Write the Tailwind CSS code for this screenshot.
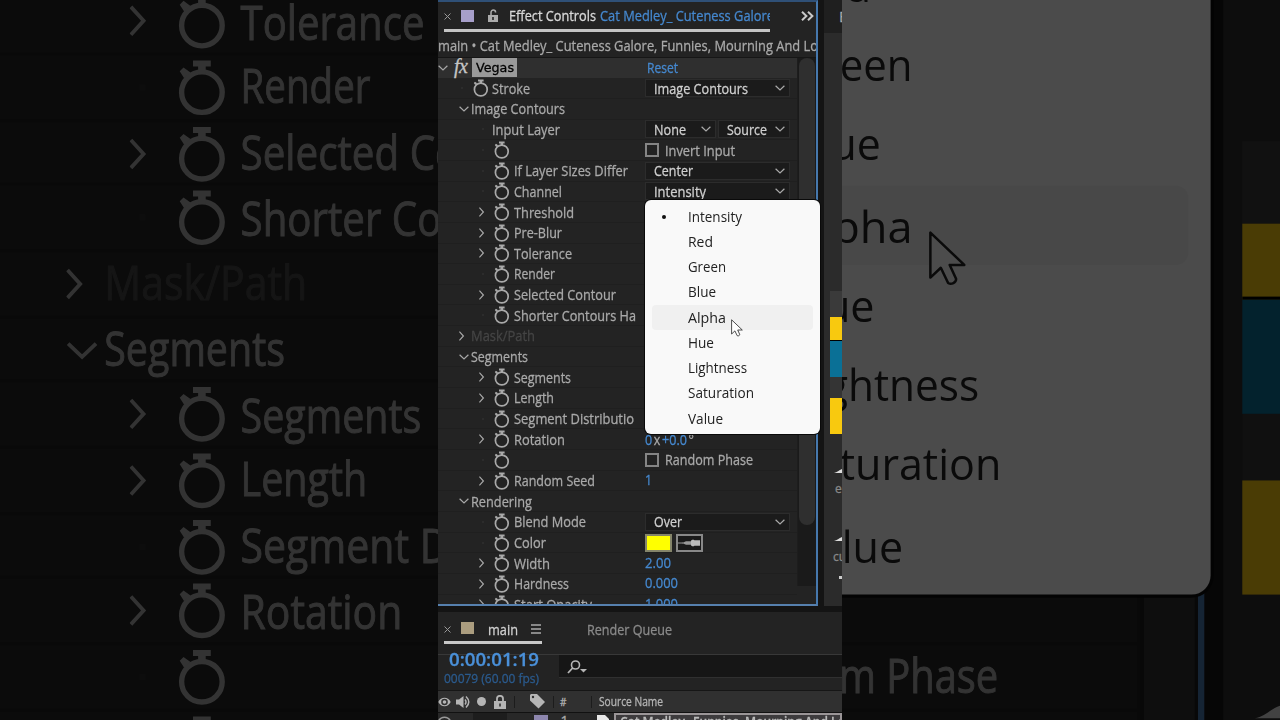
<!DOCTYPE html>
<html lang="en" class="overflow-hidden h-[720px]">
<head>
    <meta charset="UTF-8">
    <meta name="viewport" content="width=device-width, initial-scale=1.0">
    <title>Effect Controls</title>
    <script src="https://cdn.jsdelivr.net/npm/@tailwindcss/browser@4"></script>
</head>
<body class="w-[1280px] h-[720px] overflow-hidden bg-black relative font-['Open_Sans',sans-serif] text-[15px] leading-none">
    <!-- Shared icons -->
    <svg class="hidden">
        <symbol id="watch" viewBox="0 0 16 18">
            <circle cx="7.800" cy="10.5" r="6.4" fill="none" stroke="currentColor" stroke-width="1.7"/>
            <path d="M5 .5h5.6v1.9H9v2H6.6v-2H5zM.8 3.9 2 2.700l2.2 1.6-2 1.8z" fill="currentColor"/>
        </symbol>
        <symbol id="down" viewBox="0 0 10 6">
            <path d="M.6.8 5 5 9.4.8" fill="none" stroke="currentColor" stroke-width="1.2"/>
        </symbol>
        <symbol id="right" viewBox="0 0 6 10">
            <path d="M.4.6 4.400 5 .4 9.4" fill="none" stroke="currentColor" stroke-width="1.2"/>
        </symbol>
    </svg>

    <!-- Dimmed, enlarged copy of the stage goes here -->
    <div id="backdrop" class="absolute top-0 left-[438px] w-[404px] h-[720px] scale-[3.17] brightness-[.3] overflow-hidden"></div>

    <main id="stage" class="relative mx-auto w-[404px] h-[720px] overflow-hidden bg-[#141414] text-[#a9a9a9] [-webkit-text-stroke-width:0.3px] flex flex-col">
        <div class="flex h-[606px] shrink-0">
            <!-- Effect controls panel -->
            <section class="w-[380px] h-[606px] shrink-0 bg-[#232323] border-t-2 border-r-2 border-b-2 border-t-[#2f5077] border-r-[#4678ad] border-b-[#5680ae] overflow-hidden">
                <div class="flex h-[30px]">
                    <div class="relative w-[326px] h-[30px] ml-1.5 flex items-center border-b-[3px] border-[#c4c4c4] overflow-hidden shrink-0">
                        <svg class="w-[7px] h-[7px] mt-[2px] shrink-0 text-[#999]" viewBox="0 0 7 7"><path d="M.5.5l6 6M6.5.5l-6 6" stroke="currentColor"/></svg>
                        <span class="w-[13px] h-[12px] bg-[#a79fca] ml-[10px] shrink-0"></span>
                        <svg class="w-[12px] h-[13px] ml-[13px] shrink-0 text-[#aaa]" viewBox="0 0 12 13"><path d="M1 6h10v7H1zM5.2 8h1.6v3H5.2z" fill-rule="evenodd" fill="currentColor"/><path d="M4 6V3.4a2.3 2.3 0 0 1 4.6 0" fill="none" stroke="currentColor" stroke-width="1.5"/></svg>
                        <span class="w-[91px] ml-[10px] shrink-0 text-[#d8d8d8]"><span data-w="87">Effect Controls</span></span>
                        <span class="text-[#4588cf]"><span data-w="174">Cat Medley_ Cuteness Galore</span></span>
                    </div>
                    <svg class="w-[13px] h-[10px] mt-[9px] ml-[31px] text-[#c9c9c9]" viewBox="0 0 13 10"><path d="M1 .8 5.4 5 1 9.2M7 .8 11.4 5 7 9.2" fill="none" stroke="currentColor" stroke-width="2"/></svg>
                </div>
                <div class="h-[25.6px] flex items-center pt-0.5 border-b border-[#161616]">
                    <span data-w="380">main • Cat Medley_ Cuteness Galore, Funnies, Mourning And Lo</span>
                </div>
                <div class="flex">
                    <div id="rows" class="w-[359px] h-[546px] shrink-0 overflow-hidden"></div>
                    <div class="w-[19px] h-[528px] shrink-0 bg-[#1a1a1a] border-l border-[#1d1d1d] px-px">
                        <div class="h-[467px] rounded-full bg-[#2f2f2f]"></div>
                    </div>
                </div>
            </section>
            <!-- Neighbouring panel, cut off by the edge -->
            <aside class="ml-[6px] w-[18px] shrink-0 bg-[#2b2b2b] flex flex-col overflow-hidden">
                <div class="h-[33px] shrink-0 bg-[#1f1f1f] pt-[9px] pl-[15px]">E</div>
                <div class="h-[258px] shrink-0"></div>
                <div class="h-[26px] shrink-0 ml-[5.500px] bg-[#3a3a3a]"></div>
                <div class="h-[24px] shrink-0 ml-[5.500px] bg-[#f8c90f] border-b border-black"></div>
                <div class="h-[36px] shrink-0 ml-[5.500px] bg-[#0a7096]"></div>
                <div class="h-[21px] shrink-0 ml-[5.500px] bg-[#343434]"></div>
                <div class="h-[36px] shrink-0 ml-[5.500px] bg-[#f8c90f]"></div>
                <svg class="w-[8px] h-[8px] ml-[10px] mt-[32px] shrink-0 text-[#ddd]" viewBox="0 0 8 8"><path d="M0 7c3-.5 5-3 8-4v4z" fill="currentColor"/></svg>
                <div class="h-[20px] mt-[9px] ml-[11px] shrink-0 text-[12px] text-[#888]">e</div>
                <svg class="w-[8px] h-[8px] ml-[10px] mt-[31px] shrink-0 text-[#ddd]" viewBox="0 0 8 8"><path d="M0 7c3-.5 5-3 8-4v4z" fill="currentColor"/></svg>
                <div class="h-[14px] mt-[9px] ml-[9px] shrink-0 text-[12px] text-[#888]">cu</div>
                <div class="w-[3px] h-[3px] mt-[11px] ml-[15px] shrink-0 bg-[#ccc]"></div>
            </aside>
        </div>

        <!-- Timeline -->
        <section class="mt-[6px] h-[108px] shrink-0 bg-[#232323] overflow-hidden">
            <div class="h-[43px] flex border-b border-[#383838]">
                <div class="ml-1.5 w-[98px] h-[32px] flex items-center pt-[5px] border-b-[3px] border-[#c8c8c8]">
                    <svg class="w-[7px] h-[7px] text-[#999]" viewBox="0 0 7 7"><path d="M.5.5l6 6M6.5.5l-6 6" stroke="currentColor"/></svg>
                    <span class="w-[13px] h-[12px] bg-[#ab9d7f] ml-[10px] -mt-[2px]"></span>
                    <span class="ml-[14px] w-[43px] text-[#d0d0d0]"><span data-w="30">main</span></span>
                    <svg class="w-[10px] h-[10px] text-[#aaa]" viewBox="0 0 10 10"><path d="M0 1h10M0 5h10M0 9h10" stroke="currentColor" stroke-width="1.3"/></svg>
                </div>
                <div class="ml-[45px] pt-[10px] text-[#8a8a8a]"><span data-w="85">Render Queue</span></div>
            </div>
            <div class="h-[35px] flex">
                <div class="w-[121px] shrink-0">
                    <div class="pl-[11px] -mt-[5px] text-[18px] font-semibold text-[#4a90d9]"><span data-w="90">0:00:01:19</span></div>
                    <div class="pl-1.5 mt-[4px] text-[13px] text-[#2b5b8e]"><span data-w="95">00079 (60.00 fps)</span></div>
                </div>
                <div class="flex-1 h-[23px] bg-[#161616] border-b border-[#303030] pt-[5px] pl-[8px]">
                    <svg class="w-[22px] h-[15px] text-[#b5b5b5]" viewBox="0 0 22 15"><circle cx="8.5" cy="5" r="4" fill="none" stroke="currentColor" stroke-width="1.6"/><path d="M5.6 8 1 13" stroke="currentColor" stroke-width="1.8"/><path d="M13 9h7l-3.500 3.500z" fill="currentColor"/></svg>
                </div>
            </div>
            <div class="h-[23px] bg-[#303030] border-t border-b border-t-[#161616] border-b-[#111] flex items-center text-[#b5b5b5] text-[12px]">
                <svg class="w-[13px] h-[10px] shrink-0" viewBox="0 0 13 10"><path d="M.3 5C3-.6 10-.6 12.700 5 10 10.600 3 10.600.3 5zM6.500 1.700a3.300 3.300 0 1 0 0 6.600 3.300 3.300 0 0 0 0-6.600z" fill="currentColor" fill-rule="evenodd"/><circle cx="6.500" cy="5" r="1.800" fill="currentColor"/></svg>
                <svg class="w-[15px] h-[14px] ml-[5px] shrink-0" viewBox="0 0 15 14"><path d="M0 4.500h3L7.500 1v12L3 9.500H0z" fill="currentColor"/><path d="M9 4.500q2 2.500 0 5M10 1.500q5.500 5.500 0 11" fill="none" stroke="currentColor" stroke-width="1.500"/></svg>
                <span class="size-[9px] rounded-full bg-[#b5b5b5] ml-[6px] shrink-0"></span>
                <svg class="w-[12px] h-[14px] ml-[8px] shrink-0" viewBox="0 0 12 14"><path d="M0 6h12v8H0zM5.200 8.500v3h1.600v-3z" fill="currentColor" fill-rule="evenodd"/><path d="M3 6V3.800a3 3 0 0 1 6 0V6" fill="none" stroke="currentColor" stroke-width="1.800"/></svg>
                <span class="w-px h-[12px] bg-[#1c1c1c] ml-[8px]"></span>
                <svg class="w-[15px] h-[15px] ml-[15px] shrink-0" viewBox="0 0 15 15"><path d="M0 1 1 0h6l8 8-6.500 6.500L0 6.500zM3 1.800a1.200 1.200 0 1 0 0 2.400 1.200 1.200 0 0 0 0-2.400z" fill="currentColor" fill-rule="evenodd"/></svg>
                <span class="w-px h-[12px] bg-[#1c1c1c] ml-[8px]"></span>
                <span class="ml-[6px] w-[31px] text-[10px]">#</span>
                <span class="w-px h-[12px] bg-[#1c1c1c]"></span>
                <span class="ml-[7px]"><span data-w="64">Source Name</span></span>
            </div>
            <div class="h-[7px] flex overflow-hidden bg-[#282828] text-[14px]">
                <svg class="w-[13px] h-[10px] shrink-0 mt-[3px] text-[#999]" viewBox="0 0 13 10"><path d="M.5 5C3 0 10 0 12.500 5" fill="none" stroke="currentColor" stroke-width="1.500"/></svg>
                <span class="w-[34px] h-[10px] ml-[22px] bg-[#1d1d1d]"></span>
                <span class="w-[15px] h-[10px] ml-[27px] mt-[2px] bg-[#8d86ae]"></span>
                <span class="w-[35px] ml-[12px] mt-[1px]">1</span>
                <svg class="w-[12px] h-[12px] mt-[2px] ml-[2px] shrink-0" viewBox="0 0 12 12"><path d="M0 0h8l4 4v8H0z" fill="#e8e8e8"/></svg>
                <div class="ml-[5px] w-[228px] h-[20px] shrink-0 bg-[#3d3b3d] border-2 border-[#9a9597] pl-1 overflow-hidden text-[#bbb] font-semibold"><span data-w="225">Cat Medley_ Funnies, Mourning And Lo</span></div>
            </div>
        </section>

        <!-- Channel menu -->
        <ul id="menu" class="absolute left-[207px] top-[200px] w-[175px] h-[234px] rounded-md bg-[#f9f9f9] text-[#222] text-[14px] [-webkit-text-stroke-width:0] pt-[4px] px-[7px] shadow-[0_0_0_1px_#0a0a0a]"></ul>
        <svg class="absolute left-[293px] top-[319px] w-[12px] h-[18px]" viewBox="0 0 12 18"><path d="M.6.8v14.200l3.300-3.100 2.300 4.800c1 .6 2.600-.1 2.500-1.300L6.700 11h4.600z" fill="#fff" stroke="#222" stroke-width=".8" stroke-linejoin="round"/></svg>
    </main>

    <script>
        // Text squeezed to a given width in px
        const fit = (text, w) => `<span data-w="${w}">${text}</span>`;
        const icon = (id, cls) => `<svg class="${cls}"><use href="#${id}"/></svg>`;

        const select = (text, w, cls) => `<div class="h-[18px] ${cls} flex items-center justify-between bg-[#1b1b1b] border border-[#2c2c2c] pl-[8px] pr-[4px] text-[#cfcfcf]">
            <span class="w-0">${fit(text, w)}</span>${icon('down', 'w-[10px] h-[6px] shrink-0 text-[#aaa]')}</div>`;
        const check = (text, w) => `<span class="size-[14px] border-2 border-[#858585] shrink-0 mr-[6px]"></span>${fit(text, w)}`;
        const num = (text, w) => `<span class="text-[#4588cf] -mt-[2px]">${fit(text, w)}</span>`;

        // [kind, arrow, label, label width, value]
        // kind: g = group, s = stopwatch one level in, p = plain, t = stopwatch two levels in
        const rows = [
            ['s', '', 'Stroke', 38, select('Image Contours', 94, 'w-[145px]')],
            ['g', 'down', 'Image Contours', 94, ''],
            ['p', '', 'Input Layer', 68, select('None', 32, 'w-[71px] mr-[2px]') + select('Source', 40, 'w-[72px]')],
            ['t', '', '', 0, check('Invert Input', 70)],
            ['t', '', 'If Layer Sizes Differ', 114, select('Center', 39, 'w-[145px]')],
            ['t', '', 'Channel', 48, select('Intensity', 52, 'w-[145px]')],
            ['t', 'right', 'Threshold', 60, ''],
            ['t', 'right', 'Pre-Blur', 48, ''],
            ['t', 'right', 'Tolerance', 58, ''],
            ['t', '', 'Render', 41, ''],
            ['t', 'right', 'Selected Contour', 102, ''],
            ['t', '', 'Shorter Contours Ha', 122, ''],
            ['g', 'right', 'Mask/Path', 64, ''],
            ['g', 'down', 'Segments', 57, ''],
            ['t', 'right', 'Segments', 57, ''],
            ['t', 'right', 'Length', 40, ''],
            ['t', '', 'Segment Distributio', 120, ''],
            ['t', 'right', 'Rotation', 51, `<span class="text-[#4588cf]">${fit('0<span class="text-[#a9a9a9] px-[2px]">x</span>+0.0<span class="text-[#a9a9a9] pl-[2px]">°</span>', 49)}</span>`],
            ['t', '', '', 0, check('Random Phase', 88)],
            ['t', 'right', 'Random Seed', 81, num('1', 7)],
            ['g', 'down', 'Rendering', 61, ''],
            ['t', '', 'Blend Mode', 72, select('Over', 28, 'w-[145px]')],
            ['t', '', 'Color', 32, `<span class="w-[27px] h-[18px] border-2 border-[#85856a] bg-[#ffff00] mr-[4px]"></span>
                <span class="w-[27px] h-[18px] border-2 border-[#888] flex items-center bg-[#1a1a1a]"><svg class="w-[23px] h-[8px]" viewBox="0 0 23 8"><path d="M0 4h5" stroke="#999"/><path d="M4 4 8 2.300h6v3.400H8z" fill="#999"/><path d="M13 1.500l2-1 1.500.8H22v5.400h-5.500L15 7.500l-2-1z" fill="#bbb"/></svg></span>`],
            ['t', 'right', 'Width', 36, num('2.00', 26)],
            ['t', 'right', 'Hardness', 55, num('0.000', 33)],
            ['t', 'right', 'Start Opacity', 78, num('1.000', 33)],
        ];

        const dot = '<span class="size-[2px] bg-[#2c2c2c]"></span>';
        const arrowOf = a => a === 'down' ? icon('down', 'w-[10px] h-[6px]') : a === 'right' ? icon('right', 'w-[6px] h-[10px]') : dot;
        const watch = icon('watch', 'w-[16px] h-[18px] shrink-0');

        let html = `<div class="h-[20.66px] flex items-center bg-[#2f2f2f]">
            ${icon('down', 'w-[10px] h-[6px] shrink-0')}
            <i class="w-[18px] ml-[6px] -mt-[3px] font-['Liberation_Serif',serif] text-[20px] text-[#c5c5c5] tracking-tight">fx</i>
            <div class="w-[45px] h-[19px] bg-[#9a9a9a] text-black font-['DejaVu_Sans',sans-serif] text-[13px] pl-[4px] pt-[3px] shrink-0">${fit('Vegas', 38)}</div>
            <div class="ml-[130px] text-[#4588cf]">${fit('Reset', 31)}</div></div>`;

        for (const [kind, arrow, label, w, value] of rows) {
            let left;
            if (kind === 'g') left = `<span class="w-[12.5px] ml-[20.5px] shrink-0 flex">${arrowOf(arrow)}</span>`;
            if (kind === 's') left = `<span class="w-[12px] ml-[23px] shrink-0 flex">${dot}</span>${watch}<span class="w-[3px] shrink-0"></span>`;
            if (kind === 'p') left = `<span class="w-[10px] ml-[44px] shrink-0 flex">${dot}</span>`;
            if (kind === 't') left = `<span class="w-[15px] ml-[40.5px] shrink-0 flex ${arrow ? '' : 'pl-[3px]'}">${arrowOf(arrow)}</span>${watch}<span class="w-[4px] shrink-0"></span>`;
            const tone = label === 'Mask/Path' ? 'text-[#454545]' : '';
            html += `<div class="h-[20.66px] flex items-center border-b border-[#1f1f1f]">
                <div class="w-[207px] shrink-0 flex items-center">${left}<span class="${tone}">${label ? fit(label, w) : ''}</span></div>${value}</div>`;
        }
        document.getElementById('rows').innerHTML = html;

        const items = [['Intensity', 54], ['Red', 25], ['Green', 38], ['Blue', 28], ['Alpha', 38], ['Hue', 26], ['Lightness', 59], ['Saturation', 66], ['Value', 35]];
        document.getElementById('menu').innerHTML = items.map(([text, w], i) => `
            <li class="h-[25.25px] flex items-center rounded ${i === 4 ? 'bg-[#f0f0f0]' : ''}">
                <span class="w-[36px] pl-[10px] shrink-0 flex">${i === 0 ? '<span class="size-[4px] rounded-full bg-[#111]"></span>' : ''}</span>${fit(text, w)}</li>`).join('');

        const stage = document.getElementById('stage');
        const backdrop = document.getElementById('backdrop');

        function layout() {
            const labels = [...stage.querySelectorAll('[data-w]')];
            labels.forEach(el => {
                el.classList.add('inline-block', 'origin-left', 'whitespace-nowrap', 'shrink-0');
                el.style.transform = 'none';
            });
            const widths = labels.map(el => el.getBoundingClientRect().width);
            labels.forEach((el, i) => el.style.transform = `scaleX(${el.dataset.w / widths[i]})`);

            const copy = stage.cloneNode(true);
            copy.removeAttribute('id');
            backdrop.replaceChildren(copy);
        }

        layout();
        window.addEventListener('load', layout);
        document.fonts.ready.then(layout);
    </script>
</body>
</html>
